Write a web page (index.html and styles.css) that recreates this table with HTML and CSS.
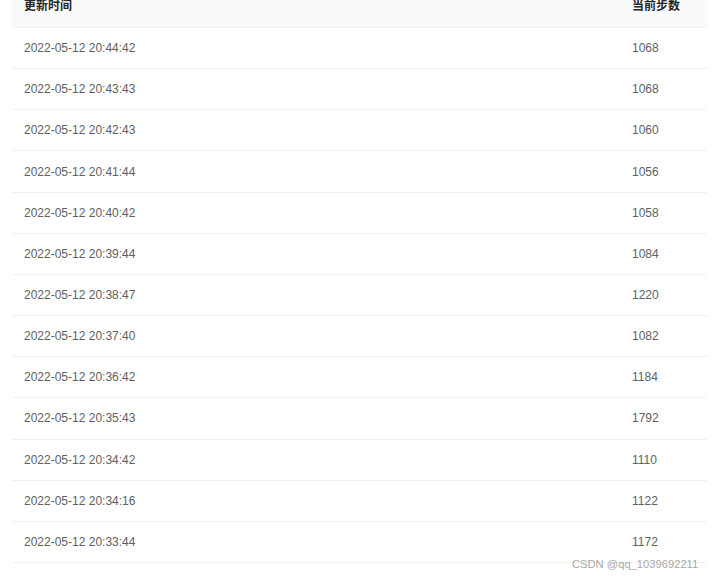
FILE: index.html
```html
<!DOCTYPE html>
<html lang="zh">
<head>
<meta charset="utf-8">
<title>步数记录</title>
<link rel="stylesheet" href="styles.css">
</head>
<body>
<div class="table">
  <div class="row head"><div class="cell">更新时间</div><div class="cell">当前步数</div></div>
  <div class="row"><div class="cell">2022-05-12 20:44:42</div><div class="cell">1068</div></div>
  <div class="row"><div class="cell">2022-05-12 20:43:43</div><div class="cell">1068</div></div>
  <div class="row"><div class="cell">2022-05-12 20:42:43</div><div class="cell">1060</div></div>
  <div class="row"><div class="cell">2022-05-12 20:41:44</div><div class="cell">1056</div></div>
  <div class="row"><div class="cell">2022-05-12 20:40:42</div><div class="cell">1058</div></div>
  <div class="row"><div class="cell">2022-05-12 20:39:44</div><div class="cell">1084</div></div>
  <div class="row"><div class="cell">2022-05-12 20:38:47</div><div class="cell">1220</div></div>
  <div class="row"><div class="cell">2022-05-12 20:37:40</div><div class="cell">1082</div></div>
  <div class="row"><div class="cell">2022-05-12 20:36:42</div><div class="cell">1184</div></div>
  <div class="row"><div class="cell">2022-05-12 20:35:43</div><div class="cell">1792</div></div>
  <div class="row"><div class="cell">2022-05-12 20:34:42</div><div class="cell">1110</div></div>
  <div class="row"><div class="cell">2022-05-12 20:34:16</div><div class="cell">1122</div></div>
  <div class="row"><div class="cell">2022-05-12 20:33:44</div><div class="cell">1172</div></div>
</div>
<div class="watermark">CSDN @qq_1039692211</div>
</body>
</html>
```
FILE: styles.css
```css
html, body {
  margin: 0;
  padding: 0;
  background: #fff;
  overflow: hidden;
}
body {
  font-family: "Liberation Sans", Arial, "Noto Sans CJK SC", sans-serif;
  font-size: 12px;
  color: #606060;
  position: relative;
  height: 577px;
}
.table {
  margin: -19px 0 0 12px;
  width: 695px;
}
.row {
  display: grid;
  grid-template-columns: 608px 1fr;
  height: 40.17px;
  align-items: center;
  border-bottom: 1px solid #f0f0f0;
}
.row.head {
  height: 46px;
  background: #fafafa;
  color: #262626;
  font-weight: 600;
  border-bottom: 1px solid #f3f3f3;
}
.cell {
  padding-left: 12px;
  white-space: nowrap;
}
.watermark {
  position: absolute;
  left: 572px;
  top: 558px;
  font-size: 11.2px;
  color: #a8a8a8;
  white-space: nowrap;
}
```
